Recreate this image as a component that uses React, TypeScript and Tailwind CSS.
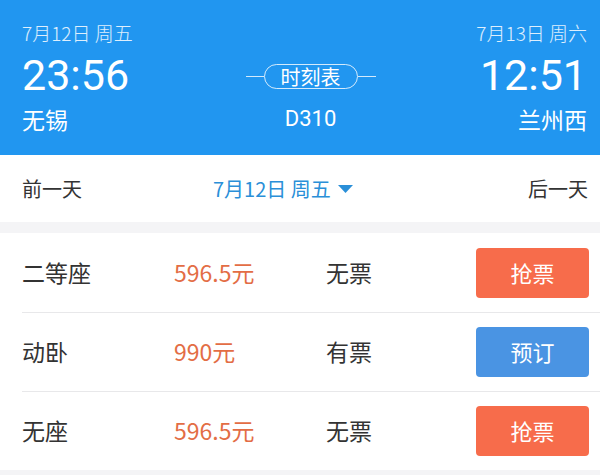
const font = "font-['Noto_Sans_CJK_SC','Noto_Sans',sans-serif]";

type Seat = { name: string; price: string; status: string; action: string; kind: "grab" | "book" };

const seats: Seat[] = [
  { name: "二等座", price: "596.5元", status: "无票", action: "抢票", kind: "grab" },
  { name: "动卧", price: "990元", status: "有票", action: "预订", kind: "book" },
  { name: "无座", price: "596.5元", status: "无票", action: "抢票", kind: "grab" },
];

export default function App() {
  return (
    <div className={`h-[475px] w-[600px] overflow-hidden bg-[#f4f4f6] ${font}`}>
      <div className="flex h-[155px] items-start justify-between bg-[#2196f0] pl-[22px] pr-[13px] pt-[19px] text-white">
        <div className="flex flex-col">
          <div className="text-[19px] font-light leading-[28px] text-white/85">7月12日 周五</div>
          <div className="mt-[5px] font-['Roboto','Noto_Sans',sans-serif] text-[43px] leading-[46px]">23:56</div>
          <div className="mt-[5px] text-[23px] leading-[32px]">无锡</div>
        </div>
        <div className="ml-[12px] flex flex-col items-center pt-[45px]">
          <div className="flex items-center">
            <span className="h-px w-[18px] bg-white/80" />
            <span className="flex h-[25px] w-[94px] items-center justify-center rounded-full border border-white/80 text-[20px] leading-none">
              时刻表
            </span>
            <span className="h-px w-[18px] bg-white/80" />
          </div>
          <div className="mt-[16px] font-['Roboto','Noto_Sans',sans-serif] text-[22px] leading-[28px]">D310</div>
        </div>
        <div className="flex flex-col items-end">
          <div className="text-[19px] font-light leading-[28px] text-white/85">7月13日 周六</div>
          <div className="mt-[5px] font-['Roboto','Noto_Sans',sans-serif] text-[43px] leading-[46px]">12:51</div>
          <div className="mt-[5px] text-[23px] leading-[32px]">兰州西</div>
        </div>
      </div>

      <div className="flex h-[67px] items-center bg-white pl-[22px] pr-[12px] text-[20px] text-[#333]">
        <span className="w-[191px]">前一天</span>
        <span className="flex items-center gap-[7px] text-[#2a8fd8]">
          7月12日 周五
          <svg width="15" height="8" viewBox="0 0 15 8" className="mt-[1px]">
            <path d="M0 0h15L7.5 8z" fill="#2a8fd8" />
          </svg>
        </span>
        <span className="ml-auto">后一天</span>
      </div>

      <div className="mt-[11px] bg-white">
        {seats.map((s, i) => (
          <div key={s.name} className="relative flex h-[79px] items-center pl-[22px] pr-[11px]">
            {i > 0 && <span className="absolute left-[22px] right-0 top-0 h-px bg-[#e8e8ea]" />}
            <span className="w-[152px] text-[23px] text-[#333]">{s.name}</span>
            <span className="w-[152px] text-[23px] text-[#e36d45]">{s.price}</span>
            <span className="flex-1 text-[23px] text-[#333]">{s.status}</span>
            <button
              type="button"
              className={
                s.kind === "grab"
                  ? "h-[50px] w-[113px] rounded-[4px] bg-[#f76c4b] text-[22px] text-white"
                  : "h-[50px] w-[113px] rounded-[4px] bg-[#4a94e3] text-[22px] text-white"
              }
            >
              {s.action}
            </button>
          </div>
        ))}
      </div>
    </div>
  );
}
